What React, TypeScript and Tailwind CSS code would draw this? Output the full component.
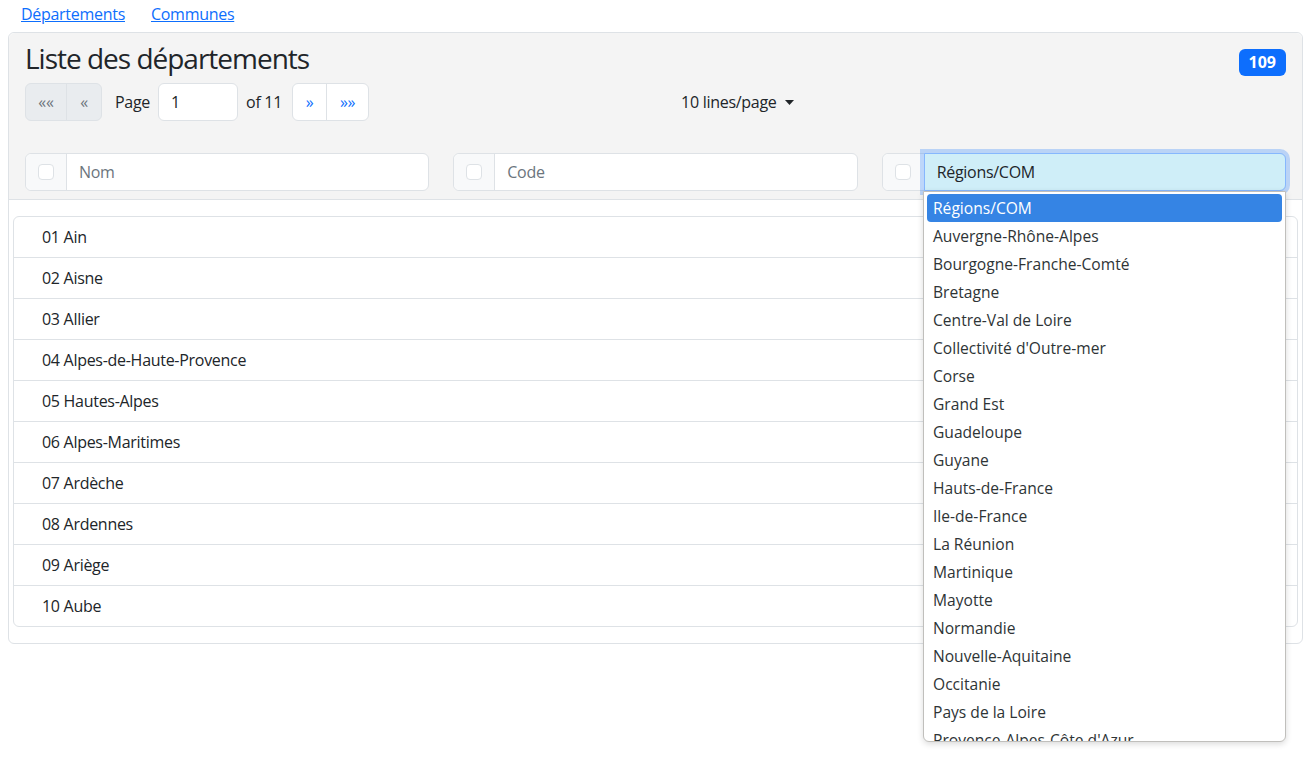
const departements = [
  '01 Ain',
  '02 Aisne',
  '03 Allier',
  '04 Alpes-de-Haute-Provence',
  '05 Hautes-Alpes',
  '06 Alpes-Maritimes',
  '07 Ardèche',
  '08 Ardennes',
  '09 Ariège',
  '10 Aube',
];

const regions = [
  'Régions/COM',
  'Auvergne-Rhône-Alpes',
  'Bourgogne-Franche-Comté',
  'Bretagne',
  'Centre-Val de Loire',
  "Collectivité d'Outre-mer",
  'Corse',
  'Grand Est',
  'Guadeloupe',
  'Guyane',
  'Hauts-de-France',
  'Ile-de-France',
  'La Réunion',
  'Martinique',
  'Mayotte',
  'Normandie',
  'Nouvelle-Aquitaine',
  'Occitanie',
  'Pays de la Loire',
  "Provence-Alpes-Côte d'Azur",
];

function Checkbox() {
  return <span className="block h-4 w-4 rounded-[4px] border border-[#dee2e6] bg-white" />;
}

function FilterInput({ placeholder }: { placeholder: string }) {
  return (
    <div className="flex h-[38px] rounded-md border border-[#dee2e6] bg-white">
      <div className="flex w-[41px] items-center justify-center rounded-l-md border-r border-[#dee2e6] bg-[#f8f9fa]">
        <Checkbox />
      </div>
      <div className="flex flex-1 items-center px-3 text-[#6c757d]">{placeholder}</div>
    </div>
  );
}

export default function App() {
  return (
    <div className="relative min-h-[758px] bg-white text-[16px] leading-6 tracking-[-0.018em] text-[#212529] [font-family:'Open_Sans',sans-serif]">
      <nav className="flex h-8 gap-[26px] pl-[21px] pt-[2px]">
        <a className="text-[#0d6efd] underline">Départements</a>
        <a className="text-[#0d6efd] underline">Communes</a>
      </nav>

      <div className="ml-2 mr-[6px] rounded-md border border-[#dee2e6]">
        <div className="rounded-t-md border-b border-[#dee2e6] bg-[#f4f4f4] px-4 pb-2 pt-2">
          <div className="flex items-start justify-between">
            <h3 className="mb-2 text-[28px] leading-[34px] tracking-[-0.036em]">Liste des départements</h3>
            <span className="mt-2 rounded-md bg-[#0d6efd] px-[10px] py-[2px] text-[16px] font-bold leading-[23px] tracking-normal text-white">
              109
            </span>
          </div>

          <div className="flex h-[38px] items-center">
            <div className="flex h-[38px] rounded-md border border-[#dee2e6] bg-[#e9ecef] text-[#6c757d]">
              <span className="flex w-[41px] items-center justify-center border-r border-[#dee2e6]">««</span>
              <span className="flex w-[34px] items-center justify-center">«</span>
            </div>
            <span className="ml-[13px]">Page</span>
            <div className="ml-2 flex h-[38px] w-20 items-center rounded-md border border-[#dee2e6] bg-white px-3">1</div>
            <span className="ml-2">of 11</span>
            <div className="ml-[10px] flex h-[38px] rounded-md border border-[#dee2e6] bg-white text-[#0d6efd]">
              <span className="flex w-[34px] items-center justify-center border-r border-[#dee2e6]">»</span>
              <span className="flex w-[41px] items-center justify-center">»»</span>
            </div>
            <div className="ml-[312px] flex items-center gap-2">
              <span>10 lines/page</span>
              <svg width="9" height="5" viewBox="0 0 9 5">
                <path d="M0 0h9L4.5 5z" fill="#212529" />
              </svg>
            </div>
          </div>

          <div className="mt-8 grid grid-cols-3 gap-6">
            <FilterInput placeholder="Nom" />
            <FilterInput placeholder="Code" />
            <div className="flex h-[38px] rounded-md border border-[#dee2e6] bg-white">
              <div className="flex w-[41px] items-center justify-center rounded-l-md bg-[#f8f9fa]">
                <Checkbox />
              </div>
              <div className="-my-px -mr-px flex flex-1 items-center rounded-r-md border border-[#86b7fe] bg-[#cfeef8] px-3 shadow-[0_0_0_4px_rgba(13,110,253,0.25)]">
                Régions/COM
              </div>
            </div>
          </div>
        </div>

        <div className="px-1 py-4">
          <ul className="rounded-md border border-[#dee2e6]">
            {departements.map((d, i) => (
              <li
                key={d}
                className={`px-[28px] py-2 ${i < departements.length - 1 ? 'border-b border-[#dee2e6]' : ''}`}
              >
                {d}
              </li>
            ))}
          </ul>
        </div>
      </div>

      <div className="absolute left-[923px] top-[191px] h-[551px] w-[363px] overflow-hidden rounded-b-md border border-[#c0bfbc] bg-white px-[3px] pt-[2px] tracking-normal shadow-[0_2px_6px_rgba(0,0,0,0.15)]">
        {regions.map((r, i) => (
          <div
            key={r}
            className={`flex h-7 items-center rounded-[4px] px-[6px] text-[15.6px] ${
              i === 0 ? 'bg-[#3584e4] text-white' : 'text-[#2e3436]'
            }`}
          >
            {r}
          </div>
        ))}
      </div>
    </div>
  );
}
